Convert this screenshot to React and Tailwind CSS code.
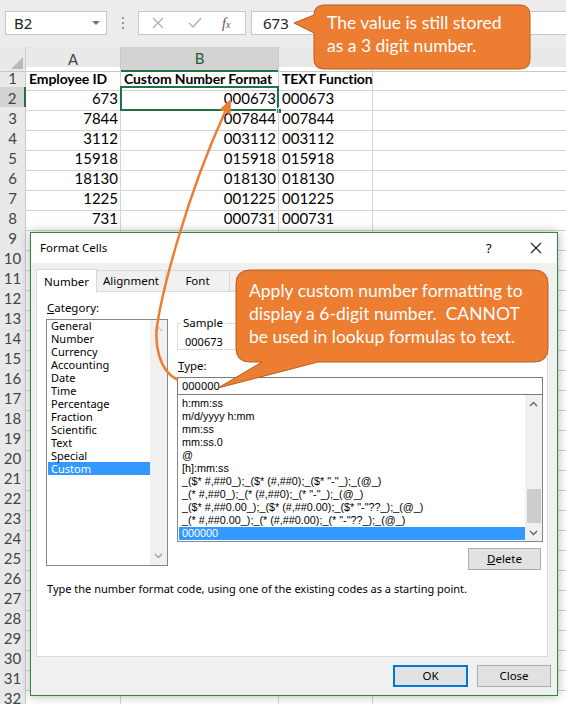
import React from 'react';

const header = ['Employee ID', 'Custom Number Format', 'TEXT Function'];
const data = [
  ['673', '000673', '000673'],
  ['7844', '007844', '007844'],
  ['3112', '003112', '003112'],
  ['15918', '015918', '015918'],
  ['18130', '018130', '018130'],
  ['1225', '001225', '001225'],
  ['731', '000731', '000731'],
];

const categories = ['General', 'Number', 'Currency', 'Accounting', 'Date', 'Time', 'Percentage', 'Fraction', 'Scientific', 'Text', 'Special', 'Custom'];

const formats = [
  'h:mm:ss',
  'm/d/yyyy h:mm',
  'mm:ss',
  'mm:ss.0',
  '@',
  '[h]:mm:ss',
  '_($* #,##0_);_($* (#,##0);_($* "-"_);_(@_)',
  '_(* #,##0_);_(* (#,##0);_(* "-"_);_(@_)',
  '_($* #,##0.00_);_($* (#,##0.00);_($* "-"??_);_(@_)',
  '_(* #,##0.00_);_(* (#,##0.00);_(* "-"??_);_(@_)',
  '000000',
];

const rows = Array.from({ length: 32 }, (_, i) => i + 1);

function FormulaBar() {
  return (
    <div className="h-[47px] bg-[#ececec] flex items-start pt-[11px] pl-[5px]">
      {/* name box */}
      <div className="w-[102px] h-[24px] bg-white border border-[#c6c6c6] flex items-center justify-between pl-[8px] pr-[6px] text-[15px] text-[#222]">
        <span>B2</span>
        <div className="w-0 h-0 border-l-[4px] border-l-transparent border-r-[4px] border-r-transparent border-t-[4px] border-t-[#777]"></div>
      </div>
      <div className="w-[31px] h-[24px] flex flex-col items-center justify-center gap-[3px]">
        <div className="w-[2px] h-[2px] bg-[#999]"></div>
        <div className="w-[2px] h-[2px] bg-[#999]"></div>
        <div className="w-[2px] h-[2px] bg-[#999]"></div>
      </div>
      {/* cancel / enter / fx */}
      <div className="w-[108px] h-[24px] bg-white border border-[#c6c6c6] flex items-center">
        <svg width="12" height="12" viewBox="0 0 12 12" className="ml-[13px]">
          <path d="M1 1 L11 11 M11 1 L1 11" stroke="#b0b0b0" strokeWidth="1.3" fill="none" />
        </svg>
        <svg width="14" height="12" viewBox="0 0 14 12" className="ml-[24px]">
          <path d="M1 6 L5 10 L13 1" stroke="#b0b0b0" strokeWidth="1.4" fill="none" />
        </svg>
        <span className="ml-[20px] font-['Liberation_Serif',serif] italic text-[14px] text-[#555]">f<span className="text-[10px]">x</span></span>
      </div>
      <div className="ml-[5px] flex-1 h-[24px] bg-white border border-[#c6c6c6] border-r-0 flex items-center pl-[11px] text-[15px] text-[#222]">
        673
      </div>
    </div>
  );
}

function Sheet() {
  return (
    <div className="font-['Lato',sans-serif] text-[15px] text-black">
      {/* column headers */}
      <div className="grid grid-cols-[26px_95px_158px_94px_1fr] h-[20px] bg-[#e9e9e9] text-[#444]">
        <div className="border-r border-b border-[#c9c9c9] relative">
          <div className="absolute right-[2px] bottom-[2px] w-0 h-0 border-l-[12px] border-l-transparent border-b-[12px] border-b-[#b9b9b9]"></div>
        </div>
        <div className="border-r border-b border-[#c9c9c9] flex items-center justify-center">A</div>
        <div className="bg-[#d3d3d3] border-r border-[#c9c9c9] border-b-2 border-b-[#217346] flex items-center justify-center text-[#1e5c36]">B</div>
        <div className="border-r border-b border-[#c9c9c9] flex items-center justify-center">C</div>
        <div className="border-b border-[#c9c9c9]"></div>
      </div>
      {rows.map((n) => {
        const d = n === 1 ? header : data[n - 2];
        const bold = n === 1 ? 'font-bold text-[14px] tracking-[-0.1px]' : '';
        return (
          <div key={n} className="grid grid-cols-[26px_95px_158px_94px_1fr] h-[20px] whitespace-nowrap">
            <div
              className={
                n === 2
                  ? 'bg-[#d3d3d3] border-b border-[#c9c9c9] border-r-2 border-r-[#217346] flex items-center justify-center text-[#444]'
                  : 'bg-[#e9e9e9] border-r border-b border-[#c9c9c9] flex items-center justify-center text-[#444]'
              }
            >
              {n}
            </div>
            <div className={`border-r border-b border-[#d4d4d4] flex items-center ${n === 1 ? 'justify-start pl-[3px]' : 'justify-end pr-[2px]'} ${bold}`}>
              {d ? d[0] : ''}
            </div>
            <div className={`border-r border-b border-[#d4d4d4] flex items-center ${n === 1 ? 'justify-start pl-[3px]' : 'justify-end pr-[2px]'} ${bold} relative`}>
              {d ? d[1] : ''}
              {n === 2 && (
                <>
                  <div className="absolute -left-[1px] -top-[1px] -right-[1px] -bottom-[1px] border-2 border-[#217346]"></div>
                  <div className="absolute -right-[4px] -bottom-[4px] w-[6px] h-[6px] bg-[#217346] border border-white"></div>
                </>
              )}
            </div>
            <div className={`border-r border-b border-[#d4d4d4] flex items-center pl-[3px] ${bold}`}>{d ? d[2] : ''}</div>
            <div className="border-b border-[#d4d4d4]"></div>
          </div>
        );
      })}
    </div>
  );
}

function ScrollArrow({ up, color }) {
  return (
    <svg width="9" height="6" viewBox="0 0 9 6">
      <path d={up ? 'M1 5 L4.5 1.5 L8 5' : 'M1 1 L4.5 4.5 L8 1'} stroke={color} strokeWidth="1.3" fill="none" />
    </svg>
  );
}

function Dialog() {
  return (
    <div className="absolute left-[30px] top-[232px] w-[528px] h-[464px] border border-[#2f8a3f] bg-[#f0f0f0] shadow-[0_0_10px_rgba(0,0,0,0.3)] font-['Noto_Sans',sans-serif] text-[11px] text-black">
      <div className="h-[30px] bg-white flex items-center pl-[9px] relative">
        <span className="text-[11.5px]">Format Cells</span>
        <span className="absolute left-[455px] top-[6px] text-[13px]">?</span>
        <svg width="12" height="12" viewBox="0 0 12 12" className="absolute left-[499px] top-[9px]">
          <path d="M1 1 L11 11 M11 1 L1 11" stroke="#222" strokeWidth="1.1" fill="none" />
        </svg>
      </div>

      <div className="pt-[5px] pl-[5px]">
        {/* tabs */}
        <div className="flex items-end h-[24px] relative">
          <div className="h-[24px] w-[61px] bg-white border border-[#d9d9d9] border-b-0 flex items-center justify-center relative top-[1px] text-[11.5px]">Number</div>
          <div className="h-[22px] w-[69px] border border-l-0 border-[#d9d9d9] flex items-center justify-center text-[11.5px]">Alignment</div>
          <div className="h-[22px] w-[64px] border border-l-0 border-[#d9d9d9] flex items-center justify-center text-[11.5px]">Font</div>
          <div className="h-[22px] w-[58px] border border-l-0 border-[#d9d9d9] flex items-center justify-start pl-[6px] text-[11.5px]">Border</div>
          <div className="h-[22px] w-[40px] border border-l-0 border-[#d9d9d9] flex items-center justify-center text-[11.5px]">Fill</div>
          <div className="h-[22px] w-[72px] border border-l-0 border-[#d9d9d9] flex items-center justify-center text-[11.5px]">Protection</div>
        </div>

        {/* pane */}
        <div className="-mt-[1px] w-[512px] h-[366px] bg-white border border-[#d9d9d9] pt-[5px] pl-[9px]">
          <div className="flex">
            {/* category column */}
            <div className="w-[122px]">
              <div className="h-[22px] flex items-center pl-[1px] text-[11.5px]">
                <span><span className="underline">C</span>ategory:</span>
              </div>
              <div className="h-[247px] border border-[#828790] flex">
                <div className="flex-1 pl-[1px] -mt-[1px]">
                  {categories.map((c) => (
                    <div
                      key={c}
                      className={`h-[13px] leading-[13px] pl-[3px] ${c === 'Custom' ? 'bg-[#3399ff] text-white' : ''}`}
                    >
                      {c}
                    </div>
                  ))}
                </div>
                <div className="w-[17px] bg-[#f0f0f0] flex flex-col items-center justify-between py-[6px]">
                  <ScrollArrow up color="#c8c8c8" />
                  <ScrollArrow color="#a0a0a0" />
                </div>
              </div>
            </div>

            {/* right column */}
            <div className="ml-[9px] w-[366px]">
              <fieldset className="mt-[18px] h-[35px] border border-[#dcdcdc] pl-[7px]">
                <legend className="px-[2px] -ml-[4px] leading-[16px] text-[11.5px]">Sample</legend>
                <div className="mt-[4px] leading-[14px]">000673</div>
              </fieldset>
              <div className="mt-[8px] h-[16px] leading-[16px] pl-[1px] text-[11.5px]">
                <span className="underline">T</span>ype:
              </div>
              <div className="mt-[3px] h-[18px] border border-[#7a7a7a] flex items-center pl-[4px] text-[11px]">
                000000
              </div>
              <div className="h-[147px] border border-[#828790] border-t-0 flex font-['Liberation_Sans',sans-serif] text-[10.8px]">
                <div className="flex-1 pt-[2px] pl-[1px] overflow-hidden whitespace-nowrap">
                  {formats.map((f, i) => (
                    <div
                      key={i}
                      className={`h-[13px] leading-[13px] pl-[3px] ${i === formats.length - 1 ? 'bg-[#3399ff] text-white' : ''}`}
                    >
                      {f}
                    </div>
                  ))}
                </div>
                <div className="w-[17px] bg-[#f0f0f0] flex flex-col items-center">
                  <div className="h-[17px] flex items-center justify-center">
                    <ScrollArrow up color="#606060" />
                  </div>
                  <div className="h-[77px]"></div>
                  <div className="w-[14px] h-[34px] bg-[#cdcdcd]"></div>
                  <div className="flex-1"></div>
                  <div className="h-[17px] flex items-center justify-center">
                    <ScrollArrow color="#606060" />
                  </div>
                </div>
              </div>
              <div className="mt-[6px] flex justify-end pr-[2px]">
                <div className="w-[73px] h-[22px] bg-[#e1e1e1] border border-[#adadad] flex items-center justify-center text-[11.5px]">
                  <span><span className="underline">D</span>elete</span>
                </div>
              </div>
            </div>
          </div>
          <div className="mt-[11px] h-[16px] leading-[16px] pl-[1px]">
            Type the number format code, using one of the existing codes as a starting point.
          </div>
        </div>
      </div>

      <div className="mt-[8px] flex justify-end gap-[9px] pr-[6px] text-[11.5px]">
        <div className="w-[75px] h-[22px] bg-[#e1e1e1] border-2 border-[#0078d7] flex items-center justify-center">OK</div>
        <div className="w-[74px] h-[22px] bg-[#e1e1e1] border border-[#adadad] flex items-center justify-center">Close</div>
      </div>
    </div>
  );
}

function Overlay() {
  return (
    <div className="absolute inset-0 z-20 pointer-events-none">
      <svg className="absolute left-0 top-0" width="566" height="704" viewBox="0 0 566 704">
        {/* curved arrow */}
        <path d="M178 380 C160 372 153 345 158 320 C163 290 185 200 225 112" stroke="#ed7d31" strokeWidth="2.5" fill="none" />
        <path d="M231 99 L230.5 114.5 L219.5 109.5 Z" fill="#ed7d31" />
        {/* callout 1 */}
        <path
          d="M324 5 H520 Q530 5 530 15 V59 Q530 69 520 69 H324 Q314 69 314 59 V33 L294 23 L314 15 Q314 5 324 5 Z"
          fill="#ed7d31"
          stroke="#b85e1f"
          strokeWidth="1"
        />
        {/* callout 2 */}
        <path
          d="M250 270 H534 Q548 270 548 284 V348 Q548 362 534 362 H318 L218 388 L262 362 H250 Q236 362 236 348 V284 Q236 270 250 270 Z"
          fill="#ed7d31"
          stroke="#b85e1f"
          strokeWidth="1"
        />
      </svg>
      <div className="absolute left-[327px] top-[11px] w-[200px] text-white font-['Lato',sans-serif] text-[17.5px] leading-[23px]">
        The value is still stored<br />as a 3 digit number.
      </div>
      <div className="absolute left-[249px] top-[279px] w-[295px] text-white font-['Lato',sans-serif] text-[17.5px] leading-[23px]">
        Apply custom number formatting to<br />display a 6-digit number.&nbsp; CANNOT<br />be used in lookup formulas to text.
      </div>
    </div>
  );
}

export default function App() {
  return (
    <div className="relative w-[566px] h-[704px] overflow-hidden bg-white">
      <FormulaBar />
      <Sheet />
      <Dialog />
      <Overlay />
    </div>
  );
}
